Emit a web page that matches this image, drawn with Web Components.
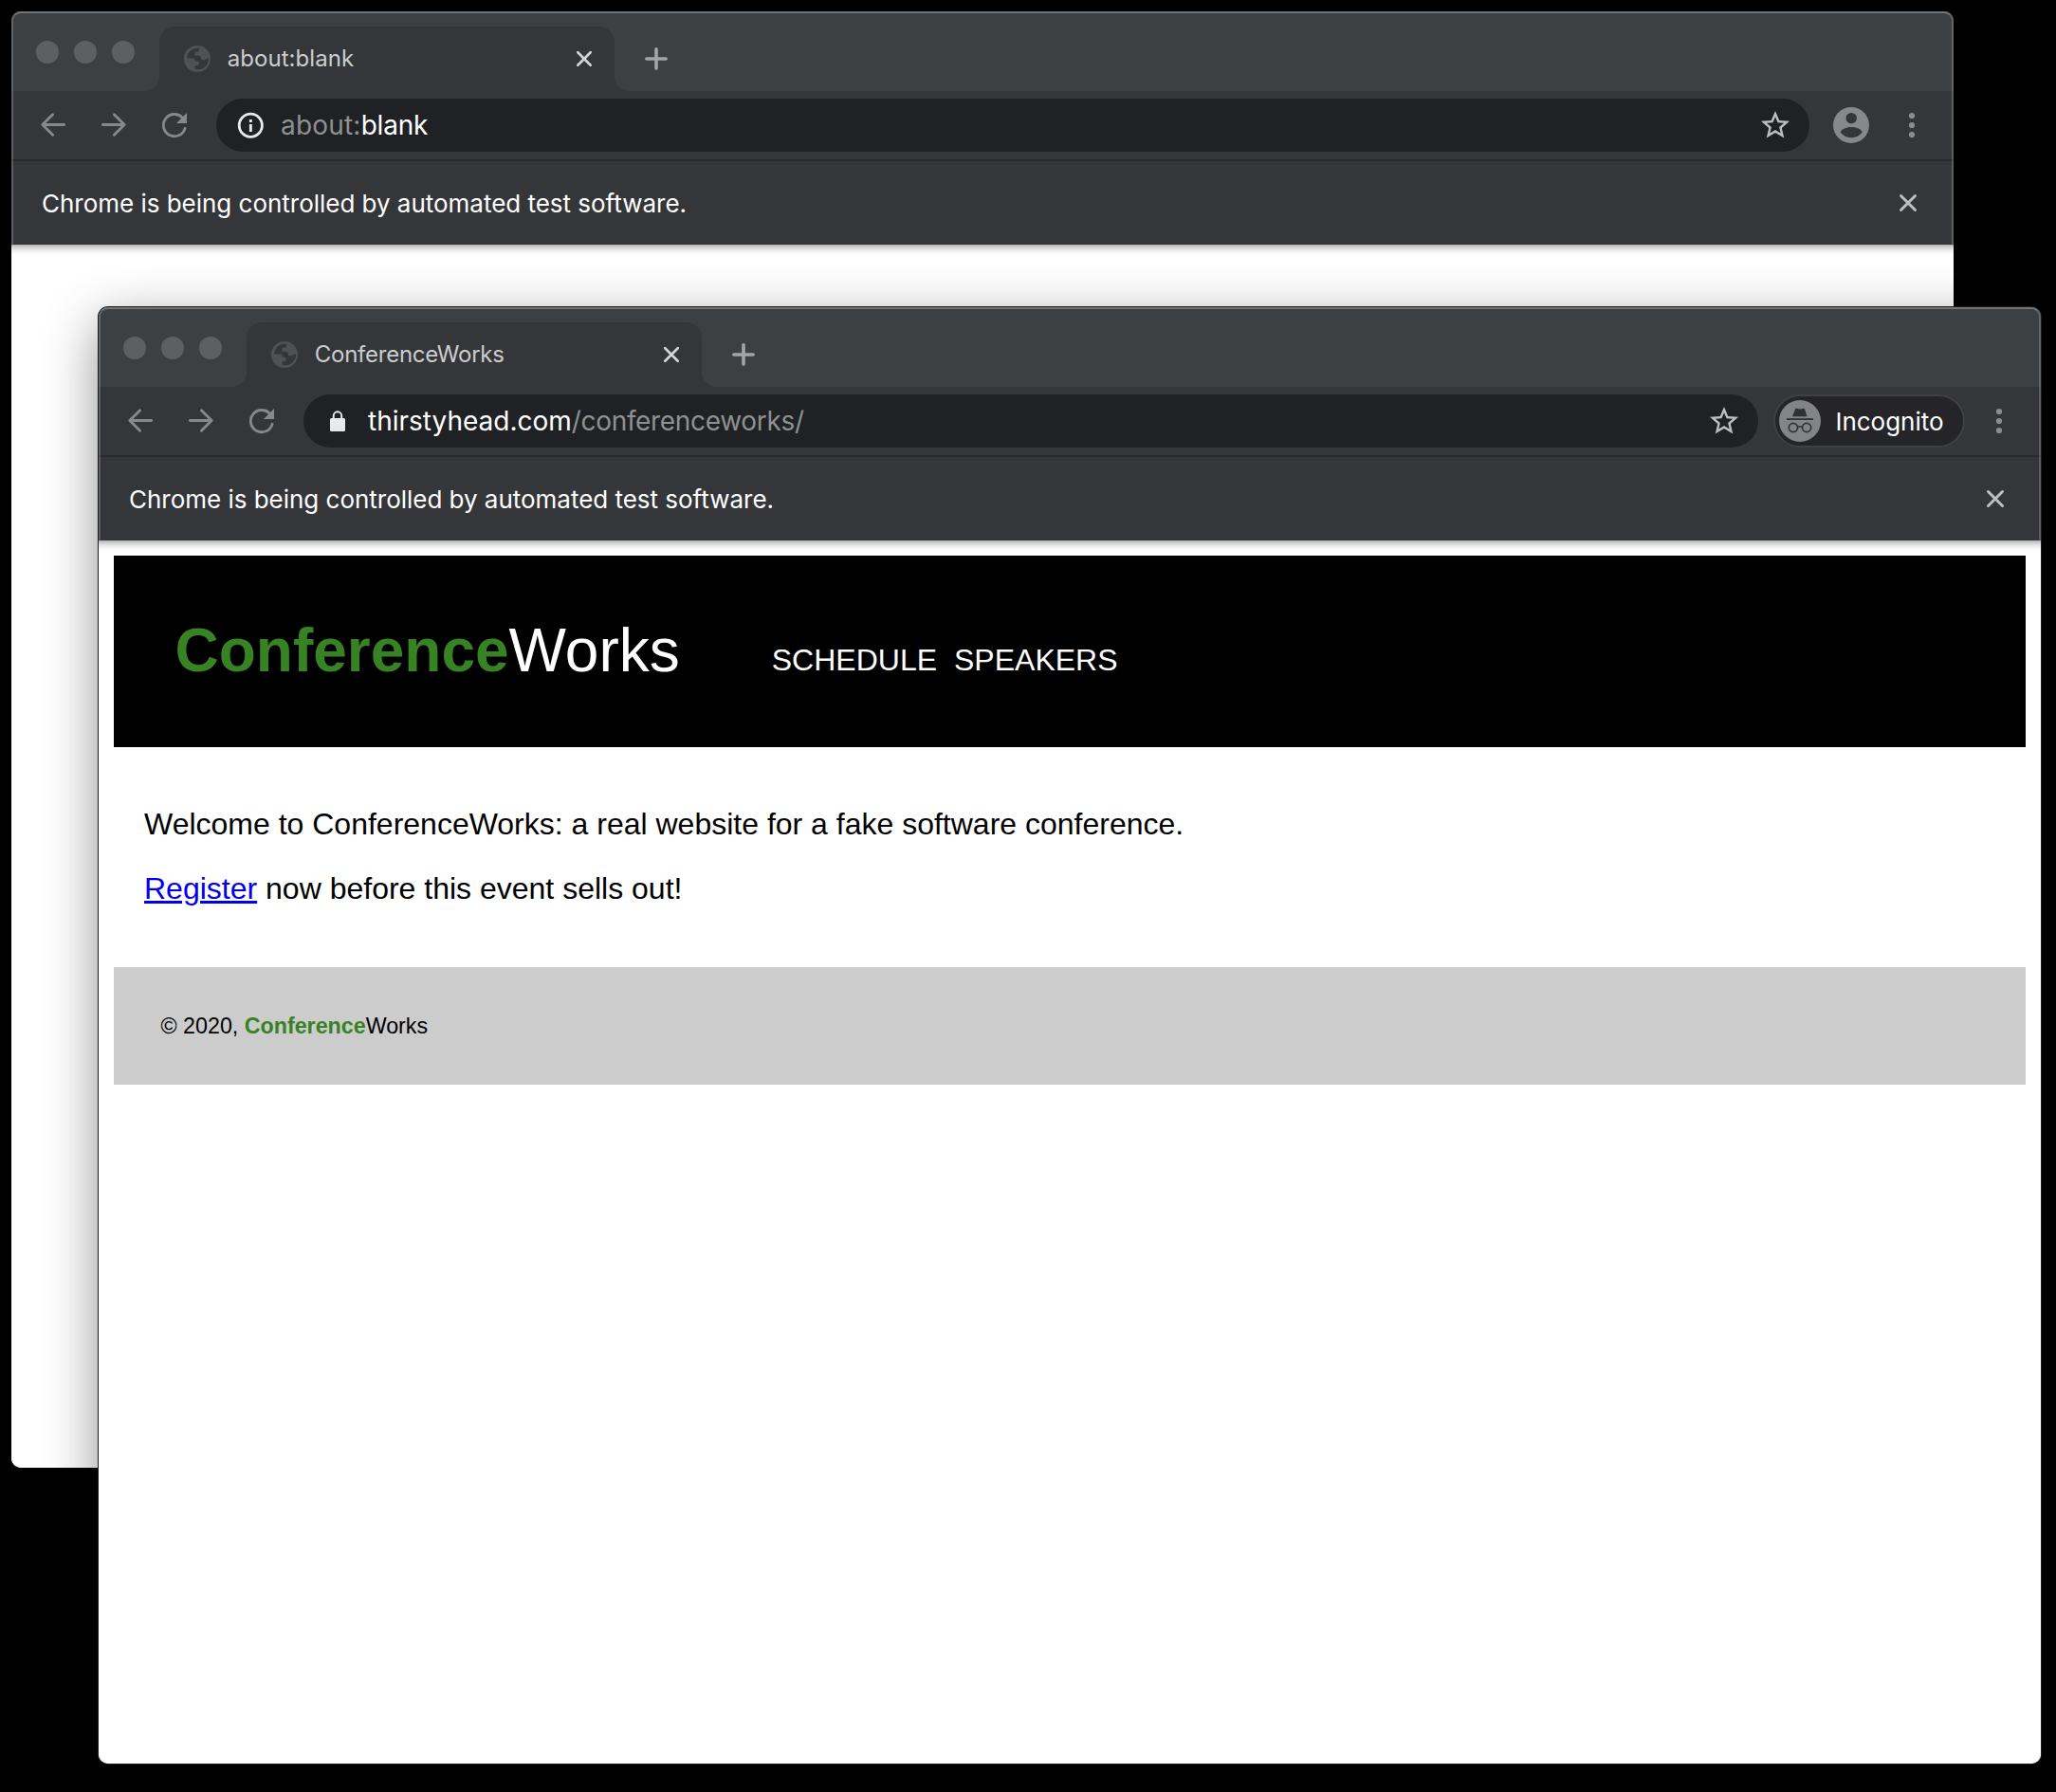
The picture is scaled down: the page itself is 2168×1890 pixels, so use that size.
<!DOCTYPE html>
<html lang="en">
<head>
<meta charset="utf-8">
<title>ConferenceWorks</title>
<style>
  html, body { margin: 0; height: 100%; background: #000; }
  body { font-family: Inter, "Liberation Sans", sans-serif; }
</style>
</head>
<body>
<desk-top>
  <browser-window style="left:12px;top:12px" label="about:blank">
    <ui-icon slot="site" name="info"></ui-icon>
    <span slot="url"><span style="color:#8f9092;letter-spacing:.2px">about:</span><span style="letter-spacing:-.2px">blank</span></span>
    <profile-button slot="profile"></profile-button>
  </browser-window>
  <browser-window front style="left:104px;top:324px;--title-spacing:-.24px" label="ConferenceWorks">
    <ui-icon slot="site" name="lock"></ui-icon>
    <span slot="url"><span>thirstyhead.com</span><span style="color:#8f9092;letter-spacing:-.33px">/conferenceworks/</span></span>
    <profile-button slot="profile" incognito>Incognito</profile-button>
    <conference-page></conference-page>
  </browser-window>
</desk-top>
<script>
const define = (name, html) => customElements.define(name, class extends HTMLElement {
  connectedCallback() {
    if (this.shadowRoot) return;
    const root = this.attachShadow({ mode: 'open' });
    const t = document.createElement('template');
    t.innerHTML = typeof html === 'function' ? html(this) : html;
    root.append(t.content.cloneNode(true));
  }
});

const line = (w, d, color) => `<path d="${d}" fill="none" stroke="${color}" stroke-width="${w}" stroke-linecap="round" stroke-linejoin="round"/>`;
const ICONS = {
  globe: [28, 28, `<path fill="#505155" fill-rule="evenodd" d="M14 0a14 14 0 1 0 0 28a14 14 0 0 0 0-28z M2.9 13.6A11.2 11.2 0 0 1 14 2.8c.8 0 1.600.1 2.300.3L16 5c-.1 1-.8 1.700-1.800 1.700h-1.200c-.9 0-1.600.7-1.600 1.600v1.200c0 .8.6 1.300 1.300 1.300h3c1.200 0 2.100.9 2.100 2v.8c0 1 .8 1.700 1.700 1.700h1.700c1.200 0 2.300-.6 3-1.500l1.900-.2a11.2 11.2 0 0 1-11.100 11.600c-1.200 0-2.400-.2-3.500-.6v-2.200c0-.9.6-1.500 1.500-1.500h1c1.200 0 2-1 2-2.100 0-1.200-.9-2.100-2.100-2.100h-1c-.8 0-1.400-.6-1.400-1.400 0-1-.8-1.700-1.800-1.700z"/>`],
  back: [28, 28, line(2.9, 'M2.800 13.500H25.600M13.600 2.700L2.800 13.500L13.600 24.300', '#87888a')],
  forward: [28, 28, line(2.9, 'M2.400 13.500H25.200M14.400 2.700L25.200 13.500L14.400 24.300', '#87888a')],
  reload: [28, 28, line(2.8, 'M22.700 6.500A11.600 11.600 0 1 0 25.100 17.300', '#87888a') + '<path d="M27 1V12H16z" fill="#87888a"/>'],
  info: [28, 28, `<circle cx="14.300" cy="14.300" r="12.100" fill="none" stroke="#e8e9ea" stroke-width="2.800"/><path fill="#e8e9ea" d="M12.900 8h2.900v3h-2.900zM12.900 13h2.900v8h-2.900z"/>`],
  lock: [28, 28, `<rect x="6" y="11" width="16" height="14" rx="1.500" fill="#e8e9ea"/><path d="M9.700 12V8.600a4.200 4.200 0 0 1 8.500 0V12" fill="none" stroke="#e8e9ea" stroke-width="2"/>`],
  star: [36, 24, `<path fill="#bdbec0" d="M22 9.240l-7.190-.62L12 2 9.190 8.630 2 9.240l5.460 4.730L5.820 21 12 17.270 18.180 21l-1.630-7.030L22 9.240zM12 15.400l-3.760 2.270 1-4.280-3.320-2.880 4.380-.38L12 6.100l1.710 4.040 4.380.38-3.320 2.880 1 4.280L12 15.400z"/>`],
  dots: [28, 28, '<g fill="#8b8c8e"><circle cx="14" cy="4" r="3.100"/><circle cx="14" cy="14" r="3.100"/><circle cx="14" cy="24" r="3.100"/></g>'],
  close: [24, 24, line(2.7, 'M5.300 5.300L18.700 18.700M18.700 5.300L5.300 18.700', '#d3d4d5')],
  closebar: [24, 24, line(3, 'M4.500 4.500L19.500 19.500M19.500 4.500L4.500 19.500', '#bebfc0')],
  plus: [24, 24, line(3.6, 'M1.900 12H22.100M12 1.900V22.100', '#a2a6a8')],
  person: [38, 38, `<circle cx="19" cy="19" r="19" fill="#87888a"/><circle cx="19.200" cy="11.600" r="5.700" fill="#35363a"/><path d="M7.800 26.500C7.800 23.500 13.500 20.900 19.200 20.900S30.600 23.500 30.600 26.500C28.200 30 24 32.200 19.200 32.200S10.200 30 7.800 26.500z" fill="#35363a"/>`],
  spy: [44, 44, `<circle cx="22" cy="22" r="22" fill="#838486"/><g fill="#303134"><path d="M14 17.300L16.900 9.700C17.200 8.800 18 8.500 18.900 8.800L21.200 9.500Q22 9.700 22.800 9.500L25.100 8.800C26 8.500 26.800 8.800 27.100 9.700L29.500 17.300z"/><rect x="8" y="19.200" width="28" height="1.800"/></g><g fill="none" stroke="#303134" stroke-width="1.700"><circle cx="14.900" cy="29" r="4.600"/><circle cx="29.100" cy="29" r="4.600"/><path d="M19.400 28.600Q22 26.900 24.600 28.600"/></g>`]
};

define('ui-icon', el => {
  const [size, box, body] = ICONS[el.getAttribute('name')];
  return `<style>:host{display:block;flex:none;width:${size}px;height:${size}px}svg{display:block;width:100%;height:100%}</style>
  <svg viewBox="0 0 ${box} ${box}">${body}</svg>`;
});

define('desk-top', `<style>:host{display:block;position:relative;width:2168px;height:1890px;background:#000;overflow:hidden}</style><slot></slot>`);

define('profile-button', el => el.hasAttribute('incognito')
  ? `<style>:host{display:flex;align-items:center;box-sizing:border-box;flex:none;width:202px;height:56px;margin:0 22px 0 16px;padding-left:4px;border:2px solid #3f4044;border-radius:28px;background:#252529;color:#fff;font-size:26px;line-height:32px;gap:15.500px;letter-spacing:-.03px}
     span{padding-top:1px}</style><ui-icon name="spy"></ui-icon><span><slot></slot></span>`
  : `<style>:host{display:block;flex:none;margin:0 31px 0 25px}</style><ui-icon name="person"></ui-icon>`);

define('window-lights', `<style>:host{display:flex;gap:16px;padding:31px 0 0 26px;width:114px}i{width:24px;height:24px;border-radius:50%;background:#5d6063}</style><i></i><i></i><i></i>`);

define('browser-tab', `<style>
  :host{display:flex;align-items:flex-end;flex:none}
  .flare{width:16px;height:16px}
  .l{background:radial-gradient(circle at 0 0,transparent 15.500px,#35363a 16.200px)}
  .r{background:radial-gradient(circle at 100% 0,transparent 15.500px,#35363a 16.200px)}
  .tab{display:flex;align-items:center;box-sizing:border-box;width:480px;height:68px;padding:0 20px 0 26px;border-radius:16px 16px 0 0;background:#35363a;color:#cbccce;font-size:24px;line-height:30px}
  .title{flex:1;padding:0 0 1px 17.700px;white-space:nowrap;letter-spacing:var(--title-spacing,.06px)}
</style>
<div class="flare l"></div><div class="tab"><ui-icon name="globe"></ui-icon><div class="title"><slot></slot></div><ui-icon name="close"></ui-icon></div><div class="flare r"></div>`);

define('info-bar', `<style>
  :host{display:flex;align-items:center;justify-content:space-between;box-sizing:border-box;height:90px;padding:0 36px 0 32px;border-top:2px solid #28292a;background:#35363a;color:#fff;font-size:26px;line-height:32px;letter-spacing:-.02px}
  span{padding-top:1px}
</style><span>Chrome is being controlled by automated test software.</span><ui-icon name="closebar"></ui-icon>`);

define('browser-window', el => `<style>
  :host{display:flex;flex-direction:column;position:absolute;width:2048px;height:1536px;border-radius:10px;background:#fff}
  :host([front]){box-shadow:0 0 0 1px #1c1c1c,0 16px 56px rgba(0,0,0,.44)}
  .chrome{position:relative;flex:none;height:246px;border-radius:10px 10px 0 0;overflow:hidden;background:#35363a}
  .chrome::after{content:"";position:absolute;inset:0;border:2px solid rgba(255,255,255,.2);border-top-color:rgba(255,255,255,.28);border-bottom:0;border-radius:10px 10px 0 0}
  .strip{display:flex;align-items:flex-end;height:84px;background:#3c4043}
  .strip window-lights{align-self:flex-start}
  .strip>ui-icon{margin:0 0 22px 16px}
  .tools{display:flex;align-items:center;height:72px;padding-left:30px}
  .nav{display:flex;gap:36px;width:186px}
  .omni{display:flex;align-items:center;flex:1;box-sizing:border-box;height:56px;padding:0 18px 0 22px;border-radius:28px;background:#202124;color:#fff;font-size:28px;line-height:34px}
  .url{flex:1;padding-left:18px;white-space:nowrap}
  .dots{margin-right:30px}
  .page{flex:1;background:linear-gradient(#a4a3a5 0,#c0c0c0 1px,#d3d3d3 3px,#ededed 6px,#fafafa 9px,#fff 12px);border-radius:0 0 10px 10px}
</style>
<div class="chrome">
  <div class="strip"><window-lights></window-lights><browser-tab>${el.getAttribute('label')}</browser-tab><ui-icon name="plus"></ui-icon></div>
  <div class="tools">
    <div class="nav"><ui-icon name="back"></ui-icon><ui-icon name="forward"></ui-icon><ui-icon name="reload"></ui-icon></div>
    <div class="omni"><slot name="site"></slot><div class="url"><slot name="url"></slot></div><ui-icon name="star"></ui-icon></div>
    <slot name="profile"></slot>
    <ui-icon class="dots" name="dots"></ui-icon>
  </div>
  <info-bar></info-bar>
</div>
<div class="page"><slot></slot></div>`);

define('brand-name', `<style>:host{display:inline}b{color:#378222}</style><b>Conference</b>Works`);

define('conference-page', `<style>
  :host{display:flex;flex-direction:column;padding:16px;font:32px/36px "Liberation Sans",Arial,sans-serif;color:#000}
  header{display:flex;align-items:flex-start;box-sizing:border-box;height:202px;padding:64px 64px 64px 64.500px;background:#000;color:#fff}
  .logo{font-size:64px;line-height:72px}
  nav{display:flex;gap:18px;margin-left:97px;padding-top:28px}
  nav a{color:#fff}
  main{display:flow-root;padding:31px 32px 33px}
  p{margin:32px 0}
  main a{color:#0000ee;text-decoration:underline}
  footer{padding:48px 48px 48px 49.500px;background:#ccc;font-size:23.250px;line-height:28px}
</style>
<header><div class="logo"><brand-name></brand-name></div><nav><a>SCHEDULE</a><a>SPEAKERS</a></nav></header>
<main><p>Welcome to ConferenceWorks: a real website for a fake software conference.</p><p><a href="#">Register</a> now before this event sells out!</p></main>
<footer>© 2020, <brand-name></brand-name></footer>`);
</script>
</body>
</html>
